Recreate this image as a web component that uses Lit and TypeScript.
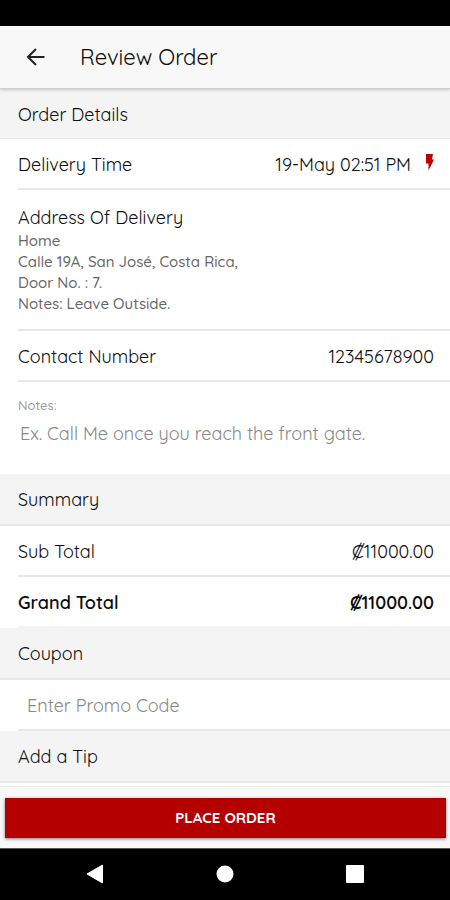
import { LitElement, html, css } from "lit";
import { customElement, state } from "lit/decorators.js";

@customElement("app-root")
export class AppRoot extends LitElement {
  static styles = css`
    :host {
      display: flex;
      flex-direction: column;
      min-height: 100vh;
      background: #fff;
      color: #0c0c0c;
      font-family: Quicksand, Lato, sans-serif;
      font-size: 18px;
      font-weight: 400;
      line-height: 24px;
    }
    * {
      box-sizing: border-box;
    }
    h1,
    h2,
    h3,
    p,
    dl,
    dd,
    address {
      margin: 0;
      font: inherit;
    }
    button,
    input,
    textarea {
      font: inherit;
      color: inherit;
      border: 0;
      margin: 0;
      background: none;
    }
    .status {
      height: 26px;
      background: #000;
    }
    .bar {
      display: flex;
      align-items: center;
      gap: 20px;
      height: 63px;
      padding: 0 12px;
      background: #f8f8f8;
      border-bottom: 1px solid #cdcdcd;
      box-shadow: 0 1px 3px rgba(0, 0, 0, 0.2);
      position: relative;
    }
    .back {
      display: flex;
      padding: 12px;
    }
    .title {
      font-size: 22px;
      line-height: 28px;
    }
    .section {
      display: flex;
      align-items: center;
      height: 52px;
      padding: 2px 18px 0;
      background: #f4f4f4;
      border-bottom: 2px solid #e8e8e8;
    }
    .section.first {
      height: 50px;
      border-bottom-width: 1px;
    }
    .body {
      flex: 1;
    }
    .row {
      display: flex;
      align-items: center;
      justify-content: space-between;
      height: 51px;
      margin-left: 18px;
      padding: 2px 16px 0 0;
      border-bottom: 2px solid #e8e8e8;
    }
    .row.total {
      font-weight: 600;
      border-color: #f4f4f4;
    }
    .when {
      display: flex;
      align-items: center;
      gap: 14px;
    }
    .bolt {
      margin-bottom: 4px;
    }
    .address {
      margin-left: 18px;
      padding: 16px 16px 15px 0;
      border-bottom: 2px solid #e8e8e8;
    }
    .lines {
      color: #666;
      font-size: 15px;
      font-weight: 500;
      line-height: 21px;
    }
    .notes {
      padding: 11px 18px 16px;
    }
    .notes label {
      display: block;
      color: #999;
      font-size: 13px;
      font-weight: 500;
    }
    textarea {
      display: block;
      width: 100%;
      height: 41px;
      padding: 5px 2px;
      resize: none;
      outline: 0;
    }
    ::placeholder {
      color: #888;
      opacity: 1;
    }
    .promo {
      flex: 1;
      min-width: 0;
      padding: 0 9px;
      outline: 0;
    }
    .footer {
      padding: 11px 4px 10px 5px;
      background: #f8f8f8;
      border-top: 1px solid #ececec;
    }
    .place {
      display: block;
      width: 100%;
      height: 40px;
      background: #b50000;
      color: #fff;
      font-size: 15px;
      font-weight: 700;
      text-transform: uppercase;
      box-shadow: 0 1px 3px rgba(0, 0, 0, 0.5);
    }
    .nav {
      display: grid;
      grid-template-columns: repeat(3, 130px);
      justify-content: center;
      height: 52px;
      padding-bottom: 2px;
      background: #000;
      border-top: 1px solid #555;
    }
    .nav button {
      display: flex;
      align-items: center;
      justify-content: center;
      padding: 0;
    }
  `;

  @state() private notes = "";
  @state() private promo = "";

  render() {
    return html`
      <div class="status"></div>
      <header class="bar">
        <button class="back" aria-label="Back">
          <svg width="24" height="24" viewBox="0 0 24 24" fill="none" stroke="#222" stroke-width="2">
            <path d="M20.500 12H4.500M12 4L4 12L12 20" />
          </svg>
        </button>
        <h1 class="title">Review Order</h1>
      </header>
      <main class="body">
        <h2 class="section first">Order Details</h2>
        <div class="row">
          <span>Delivery Time</span>
          <span class="when">
            <span>19-May 02:51 PM</span>
            <svg class="bolt" width="9" height="17" viewBox="0 0 9 17" aria-hidden="true">
              <path fill="#b80000" d="M1 0H8L7 5.500H9L3.500 16.500V9.500H1Z" />
            </svg>
          </span>
        </div>
        <div class="address">
          <h3>Address Of Delivery</h3>
          <address class="lines">
            <p>Home</p>
            <p>Calle 19A, San José, Costa Rica,</p>
            <p>Door No. : 7.</p>
            <p>Notes: Leave Outside.</p>
          </address>
        </div>
        <div class="row">
          <span>Contact Number</span>
          <span>12345678900</span>
        </div>
        <div class="notes">
          <label for="notes">Notes:</label>
          <textarea
            id="notes"
            placeholder="Ex. Call Me once you reach the front gate."
            .value=${this.notes}
            @input=${(e: Event) => (this.notes = (e.target as HTMLTextAreaElement).value)}
          ></textarea>
        </div>
        <h2 class="section">Summary</h2>
        <dl>
          <div class="row"><dt>Sub Total</dt><dd>₡11000.00</dd></div>
          <div class="row total"><dt>Grand Total</dt><dd>₡11000.00</dd></div>
        </dl>
        <h2 class="section">Coupon</h2>
        <div class="row">
          <input
            class="promo"
            type="text"
            aria-label="Promo code"
            placeholder="Enter Promo Code"
            .value=${this.promo}
            @input=${(e: Event) => (this.promo = (e.target as HTMLInputElement).value)}
          />
        </div>
        <h2 class="section">Add a Tip</h2>
      </main>
      <footer class="footer">
        <button class="place">Place Order</button>
      </footer>
      <nav class="nav" aria-label="System">
        <button aria-label="Back">
          <svg width="18" height="20" viewBox="0 0 18 20"><path fill="#fff" d="M16.500 1V19L1 10Z" stroke="#fff" stroke-linejoin="round" /></svg>
        </button>
        <button aria-label="Home">
          <svg width="18" height="18" viewBox="0 0 18 18"><circle cx="9" cy="9" r="8.500" fill="#fff" /></svg>
        </button>
        <button aria-label="Overview">
          <svg width="18" height="18" viewBox="0 0 18 18"><rect width="18" height="18" rx="1" fill="#fff" /></svg>
        </button>
      </nav>
    `;
  }
}
